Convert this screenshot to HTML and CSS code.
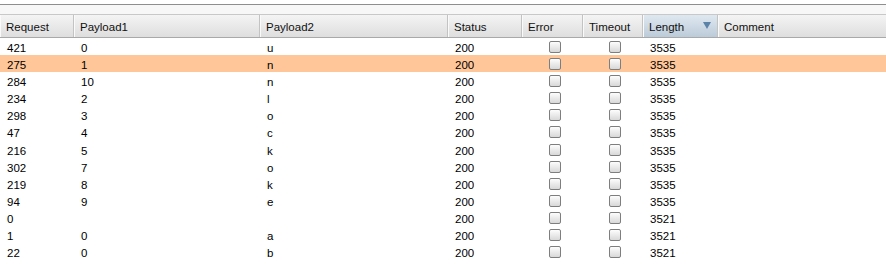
FILE: index.html
```html
<!DOCTYPE html>
<html>
<head>
<meta charset="utf-8">
<link rel="stylesheet" href="styles.css">
</head>
<body>
<div class="frame">
  <div class="topline"></div>
  <div class="gap"></div>
  <div class="table">
    <div class="row head">
      <div class="c">Request</div>
      <div class="c">Payload1</div>
      <div class="c">Payload2</div>
      <div class="c">Status</div>
      <div class="c">Error</div>
      <div class="c">Timeout</div>
      <div class="c sorted">Length<span class="arrow"></span></div>
      <div class="c">Comment</div>
    </div>
    <div class="row"><div class="c">421</div><div class="c">0</div><div class="c">u</div><div class="c">200</div><div class="c cb"><span class="box"></span></div><div class="c cb"><span class="box"></span></div><div class="c">3535</div><div class="c"></div></div>
    <div class="row sel"><div class="c">275</div><div class="c">1</div><div class="c">n</div><div class="c">200</div><div class="c cb"><span class="box"></span></div><div class="c cb"><span class="box"></span></div><div class="c">3535</div><div class="c"></div></div>
    <div class="row"><div class="c">284</div><div class="c">10</div><div class="c">n</div><div class="c">200</div><div class="c cb"><span class="box"></span></div><div class="c cb"><span class="box"></span></div><div class="c">3535</div><div class="c"></div></div>
    <div class="row"><div class="c">234</div><div class="c">2</div><div class="c">l</div><div class="c">200</div><div class="c cb"><span class="box"></span></div><div class="c cb"><span class="box"></span></div><div class="c">3535</div><div class="c"></div></div>
    <div class="row"><div class="c">298</div><div class="c">3</div><div class="c">o</div><div class="c">200</div><div class="c cb"><span class="box"></span></div><div class="c cb"><span class="box"></span></div><div class="c">3535</div><div class="c"></div></div>
    <div class="row"><div class="c">47</div><div class="c">4</div><div class="c">c</div><div class="c">200</div><div class="c cb"><span class="box"></span></div><div class="c cb"><span class="box"></span></div><div class="c">3535</div><div class="c"></div></div>
    <div class="row"><div class="c">216</div><div class="c">5</div><div class="c">k</div><div class="c">200</div><div class="c cb"><span class="box"></span></div><div class="c cb"><span class="box"></span></div><div class="c">3535</div><div class="c"></div></div>
    <div class="row"><div class="c">302</div><div class="c">7</div><div class="c">o</div><div class="c">200</div><div class="c cb"><span class="box"></span></div><div class="c cb"><span class="box"></span></div><div class="c">3535</div><div class="c"></div></div>
    <div class="row"><div class="c">219</div><div class="c">8</div><div class="c">k</div><div class="c">200</div><div class="c cb"><span class="box"></span></div><div class="c cb"><span class="box"></span></div><div class="c">3535</div><div class="c"></div></div>
    <div class="row"><div class="c">94</div><div class="c">9</div><div class="c">e</div><div class="c">200</div><div class="c cb"><span class="box"></span></div><div class="c cb"><span class="box"></span></div><div class="c">3535</div><div class="c"></div></div>
    <div class="row"><div class="c">0</div><div class="c"></div><div class="c"></div><div class="c">200</div><div class="c cb"><span class="box"></span></div><div class="c cb"><span class="box"></span></div><div class="c">3521</div><div class="c"></div></div>
    <div class="row"><div class="c">1</div><div class="c">0</div><div class="c">a</div><div class="c">200</div><div class="c cb"><span class="box"></span></div><div class="c cb"><span class="box"></span></div><div class="c">3521</div><div class="c"></div></div>
    <div class="row"><div class="c">22</div><div class="c">0</div><div class="c">b</div><div class="c">200</div><div class="c cb"><span class="box"></span></div><div class="c cb"><span class="box"></span></div><div class="c">3521</div><div class="c"></div></div>
  </div>
</div>
</body>
</html>
```
FILE: styles.css
```css
html, body {
  margin: 0;
  padding: 0;
  background: #ffffff;
}
.frame {
  width: 886px;
  height: 264px;
  overflow: hidden;
  padding-top: 4px;
  box-sizing: border-box;
  font-family: "Liberation Sans", Arial, sans-serif;
  font-size: 11.5px;
  color: #000;
}
.topline {
  height: 1px;
  background: #8e8e8e;
}
.gap {
  height: 9px;
  background: #f7f7f7;
  border-bottom: 1px solid #c8c8c8;
}
.row {
  display: grid;
  grid-template-columns: 74px 186px 188px 74px 61px 60px 75px 168px;
  height: 17.17px;
  align-items: center;
}
.row.sel {
  background: #ffc799;
}
.c {
  padding-left: 7px;
  padding-top: 2px;
  white-space: nowrap;
  overflow: hidden;
}
.head {
  height: 22px;
  background: linear-gradient(#f4f4f4, #dedede);
  border-bottom: 1px solid #a9a9a9;
  align-items: stretch;
}
.head .c {
  display: flex;
  align-items: center;
  border-right: 1px solid #c3c3c3;
  box-shadow: inset 1px 0 0 #fafafa;
  padding-left: 6px;
  padding-top: 2px;
  color: #111;
}
.head .c:last-child {
  border-right: none;
}
.head .sorted {
  background: linear-gradient(#dfe8f0, #bccbd9);
  justify-content: space-between;
  padding-right: 6px;
}
.arrow {
  width: 0;
  height: 0;
  margin-bottom: 3px;
  border-left: 4px solid transparent;
  border-right: 4px solid transparent;
  border-top: 7px solid #5b82a8;
}
.cb {
  display: flex;
  justify-content: center;
  padding-left: 4px;
  padding-top: 0;
}
.box {
  width: 10px;
  height: 10px;
  border: 1px solid #7e7e7e;
  border-radius: 2px;
  background: linear-gradient(#fdfdfd, #d8d8d8);
}
```
